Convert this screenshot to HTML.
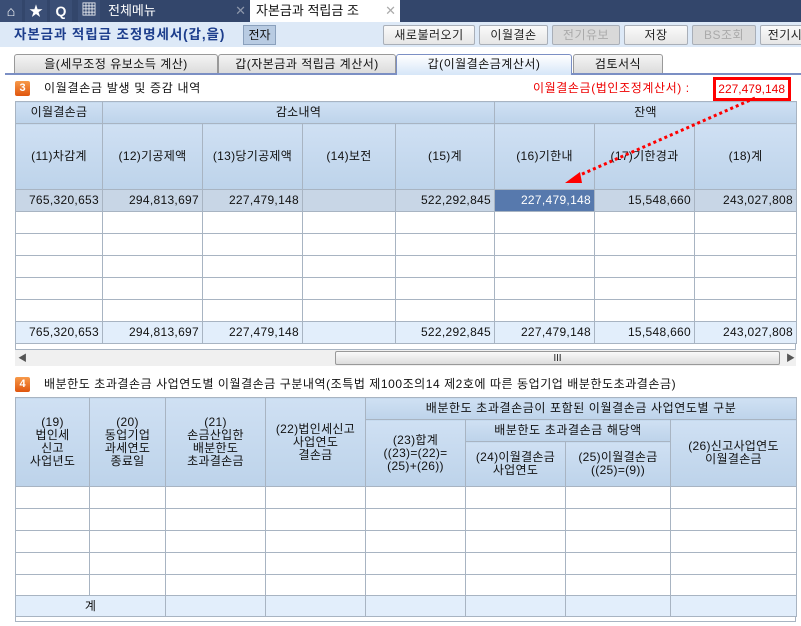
<!DOCTYPE html>
<html><head><meta charset="utf-8"><style>
*{margin:0;padding:0;box-sizing:border-box}
body{width:801px;height:626px;overflow:hidden;background:#fff;font-family:"Liberation Sans","Noto Sans CJK KR","NanumGothic",sans-serif;font-size:12px;color:#111;position:relative}
.a{position:absolute}
.top{left:0;top:0;width:801px;height:22px;background:#33466b}
.ic{top:0;height:22px;width:22px;background:#3a4e75;color:#fff;text-align:center;line-height:22px;font-weight:bold;font-size:14px}
.bar2{left:0;top:22px;width:801px;height:25px;background:#dde9f7}
.btn{top:25px;height:20px;border:1px solid #a9afb8;border-radius:2px;background:linear-gradient(#fafafa,#e6e6e6);text-align:center;line-height:18px;font-size:12px;color:#222;letter-spacing:.5px}
.dis{color:#aaa;background:#d9d9d9}
.tab{top:54px;height:19px;border:1px solid #999;border-bottom:none;background:linear-gradient(#f4f4f4,#dcdcdc);text-align:center;line-height:18px;border-radius:3px 3px 0 0;letter-spacing:.5px}
table{position:absolute;border-collapse:collapse;table-layout:fixed}
td{border:1px solid #a8b4c2;text-align:center;padding:0 3px;font-size:12px;line-height:13px;overflow:hidden;white-space:nowrap;letter-spacing:.3px}
.h td,td.h{background:linear-gradient(#cfe0f3,#bdd3ea)}
.n td{text-align:right}
.sel{background:#5779ad!important;color:#fff}
.d td{background:#c8d6e6}
.t td{background:#e2eefb}
</style></head><body>
<div class="a top"></div>
<div class="a ic" style="left:0">⌂</div>
<div class="a ic" style="left:25px">★</div>
<div class="a ic" style="left:50px">Q</div>
<div class="a ic" style="left:78px;font-size:16px">▦</div>
<div class="a" style="left:100px;top:0;width:150px;height:22px;background:#33466b;color:#fff;line-height:22px;padding-left:8px;font-size:13px">전체메뉴<span style="position:absolute;right:4px;color:#8d97ab">✕</span></div>
<div class="a" style="left:250px;top:0;width:150px;height:22px;background:#fff;line-height:22px;padding-left:6px;font-size:13px">자본금과 적립금 조<span style="position:absolute;right:4px;color:#aaa">✕</span></div>
<div class="a bar2"></div>
<div class="a" style="left:14px;top:26px;font-weight:bold;color:#1c3d8c;font-size:13.5px;line-height:17px;letter-spacing:.9px">자본금과 적립금 조정명세서(갑,을)</div>
<div class="a" style="left:243px;top:25px;width:33px;height:20px;background:#b8cbe2;border:1px solid #8aa0bc;text-align:center;line-height:18px">전자</div>
<div class="a btn" style="left:383px;width:92px">새로불러오기</div>
<div class="a btn" style="left:479px;width:69px">이월결손</div>
<div class="a btn dis" style="left:552px;width:68px">전기유보</div>
<div class="a btn" style="left:624px;width:64px">저장</div>
<div class="a btn dis" style="left:692px;width:64px">BS조회</div>
<div class="a btn" style="left:760px;width:50px">전기시</div>
<div class="a" style="left:5px;top:73px;width:796px;height:2px;background:#7b8fc4"></div>
<div class="a tab" style="left:14px;width:204px">을(세무조정 유보소득 계산)</div>
<div class="a tab" style="left:218px;width:178px">갑(자본금과 적립금 계산서)</div>
<div class="a tab" style="left:396px;width:176px;background:linear-gradient(#fff,#d6e6f8);border-color:#7b8fc4;height:21px">갑(이월결손금계산서)</div>
<div class="a tab" style="left:573px;width:90px">검토서식</div>
<div class="a" style="left:15px;top:81px;width:15px;height:15px;background:linear-gradient(#f79a4a,#e0560e);border-radius:2px;color:#fff;font-weight:bold;font-size:11px;text-align:center;line-height:15px">3</div>
<div class="a" style="left:44px;top:81px;line-height:15px;letter-spacing:.7px">이월결손금 발생 및 증감 내역</div>
<div class="a" style="left:533px;top:81px;color:#e00;line-height:15px;letter-spacing:.6px">이월결손금(법인조정계산서) :</div>
<div class="a" style="left:713px;top:77px;width:78px;height:24px;border:3px solid #f00;color:#e00;text-align:right;padding-right:3px;line-height:18px">227,479,148</div>
<table style="left:15px;top:101px;width:781px">
<colgroup><col style="width:87px"><col style="width:100px"><col style="width:100px"><col style="width:93px"><col style="width:99px"><col style="width:100px"><col style="width:100px"><col style="width:102px"></colgroup>
<tr class="h" style="height:22px"><td>이월결손금</td><td colspan="4">감소내역</td><td colspan="3">잔액</td></tr>
<tr class="h" style="height:66px"><td>(11)차감계</td><td>(12)기공제액</td><td>(13)당기공제액</td><td>(14)보전</td><td>(15)계</td><td>(16)기한내</td><td>(17)기한경과</td><td>(18)계</td></tr>
<tr class="n d" style="height:22px"><td>765,320,653</td><td>294,813,697</td><td>227,479,148</td><td></td><td>522,292,845</td><td class="sel">227,479,148</td><td>15,548,660</td><td>243,027,808</td></tr>
<tr style="height:22px"><td></td><td></td><td></td><td></td><td></td><td></td><td></td><td></td></tr>
<tr style="height:22px"><td></td><td></td><td></td><td></td><td></td><td></td><td></td><td></td></tr>
<tr style="height:22px"><td></td><td></td><td></td><td></td><td></td><td></td><td></td><td></td></tr>
<tr style="height:22px"><td></td><td></td><td></td><td></td><td></td><td></td><td></td><td></td></tr>
<tr style="height:22px"><td></td><td></td><td></td><td></td><td></td><td></td><td></td><td></td></tr>
<tr class="n t" style="height:22px"><td>765,320,653</td><td>294,813,697</td><td>227,479,148</td><td></td><td>522,292,845</td><td>227,479,148</td><td>15,548,660</td><td>243,027,808</td></tr>
</table>
<div class="a" style="left:15px;top:343px;width:781px;height:7px;border:1px solid #a8b4c2;border-top:none"></div>
<div class="a" style="left:15px;top:350px;width:781px;height:16px;background:#f0f0f0"></div>
<div class="a" style="left:18px;top:351px;font-size:9px;color:#555">◀</div>
<div class="a" style="left:786px;top:351px;font-size:9px;color:#555">▶</div>
<div class="a" style="left:335px;top:351px;width:445px;height:14px;border:1px solid #999;border-radius:2px;background:linear-gradient(#fafafa,#ddd);text-align:center;font-size:9px;line-height:12px">Ⅲ</div>
<svg class="a" style="left:560px;top:95px" width="200" height="95"><line x1="195" y1="3" x2="20" y2="80" stroke="#f00" stroke-width="3" stroke-dasharray="3,3"/><polygon points="5,88 20,77 22,88" fill="#f00"/></svg>
<div class="a" style="left:15px;top:377px;width:15px;height:15px;background:linear-gradient(#f79a4a,#e0560e);border-radius:2px;color:#fff;font-weight:bold;font-size:11px;text-align:center;line-height:15px">4</div>
<div class="a" style="left:44px;top:377px;line-height:15px;letter-spacing:.55px">배분한도 초과결손금 사업연도별 이월결손금 구분내역(조특법 제100조의14 제2호에 따른 동업기업 배분한도초과결손금)</div>
<table style="left:15px;top:397px;width:781px">
<colgroup><col style="width:74px"><col style="width:76px"><col style="width:100px"><col style="width:100px"><col style="width:100px"><col style="width:100px"><col style="width:105px"><col style="width:126px"></colgroup>
<tr class="h" style="height:22px"><td rowspan="3" style="white-space:normal">(19)<br>법인세<br>신고<br>사업년도</td><td rowspan="3">(20)<br>동업기업<br>과세연도<br>종료일</td><td rowspan="3">(21)<br>손금산입한<br>배분한도<br>초과결손금</td><td rowspan="3">(22)법인세신고<br>사업연도<br>결손금</td><td colspan="4" style="letter-spacing:.6px">배분한도 초과결손금이 포함된 이월결손금 사업연도별 구분</td></tr>
<tr class="h" style="height:22px"><td rowspan="2">(23)합계<br>((23)=(22)=<br>(25)+(26))</td><td colspan="2" style="letter-spacing:.6px">배분한도 초과결손금 해당액</td><td rowspan="2">(26)신고사업연도<br>이월결손금</td></tr>
<tr class="h" style="height:45px"><td>(24)이월결손금<br>사업연도</td><td>(25)이월결손금<br>((25)=(9))</td></tr>
<tr style="height:22px"><td></td><td></td><td></td><td></td><td></td><td></td><td></td><td></td></tr>
<tr style="height:22px"><td></td><td></td><td></td><td></td><td></td><td></td><td></td><td></td></tr>
<tr style="height:22px"><td></td><td></td><td></td><td></td><td></td><td></td><td></td><td></td></tr>
<tr style="height:22px"><td></td><td></td><td></td><td></td><td></td><td></td><td></td><td></td></tr>
<tr style="height:21px"><td></td><td></td><td></td><td></td><td></td><td></td><td></td><td></td></tr>
<tr class="t" style="height:21px"><td colspan="2">계</td><td></td><td></td><td></td><td></td><td></td><td></td></tr>
</table>
<div class="a" style="left:15px;top:617px;width:781px;height:5px;border:1px solid #a8b4c2;border-top:none"></div>
</body></html>
